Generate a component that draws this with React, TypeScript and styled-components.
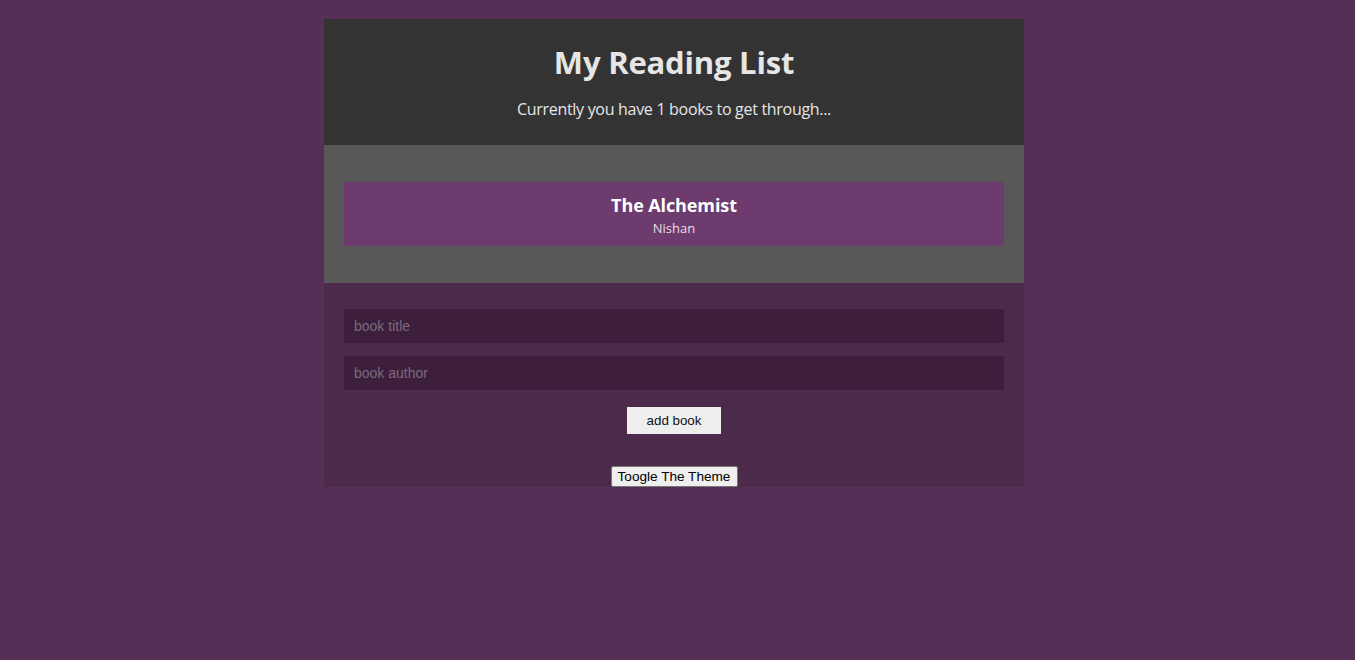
import React, { useState } from "react";
import styled, { createGlobalStyle } from "styled-components";

const GlobalStyle = createGlobalStyle`
  html, body { margin: 0; padding: 0; }
  body {
    background: #552f55;
    font-family: "Open Sans", "Noto Sans", sans-serif;
    min-height: 660px;
    padding-right: 7px;
  }
`;

const Container = styled.div`
  width: 700px;
  margin: 19px auto 0;
  background: #4c2a4c;
`;

const Navbar = styled.header`
  background: #333333;
  color: #e6e6e6;
  text-align: center;
  height: 126px;
  box-sizing: border-box;
  padding-top: 22px;
`;

const Title = styled.h1`
  margin: 0;
  font-size: 31px;
  font-weight: 700;
  line-height: 42px;
  letter-spacing: -0.2px;
`;

const Subtitle = styled.p`
  margin: 16px 0 0;
  font-size: 16px;
  line-height: 20px;
  letter-spacing: -0.3px;
`;

const ListSection = styled.section`
  background: #585858;
  padding: 37px 20px;
`;

const List = styled.ul`
  list-style: none;
  margin: 0;
  padding: 0;
`;

const BookItem = styled.li`
  background: #6e3b6e;
  color: #ffffff;
  text-align: center;
  height: 64px;
  box-sizing: border-box;
  padding-top: 11px;
`;

const BookTitle = styled.div`
  font-size: 18px;
  font-weight: 700;
  line-height: 24px;
  letter-spacing: -0.1px;
`;

const BookAuthor = styled.div`
  font-size: 13px;
  line-height: 22px;
  color: #e6dde6;
`;

const Form = styled.form`
  padding: 26px 20px 0;
  display: flex;
  flex-direction: column;
  align-items: center;
`;

const Input = styled.input`
  width: 100%;
  height: 34px;
  box-sizing: border-box;
  border: 0;
  outline: none;
  background: #3d1f3d;
  color: #dddddd;
  padding: 0 10px;
  margin-bottom: 13px;
  font-family: Arial, "Liberation Sans", sans-serif;
  font-size: 14px;
  &::placeholder { color: #7a6a7a; }
`;

const AddButton = styled.button`
  margin-top: 4px;
  width: 94px;
  height: 27px;
  border: 0;
  background: #eeeeee;
  color: #111;
  font-family: Arial, "Liberation Sans", sans-serif;
  font-size: 13.33px;
  padding: 0;
`;

const ToggleRow = styled.div`
  display: flex;
  justify-content: center;
  padding-top: 32px;
`;

const ToggleButton = styled.button`
  height: 21px;
  width: 127px;
  box-sizing: border-box;
  background: #efefef;
  border: 1px solid #767676;
  border-radius: 2px;
  color: #000;
  font-family: Arial, "Liberation Sans", sans-serif;
  font-size: 13.6px;
  padding: 0 6px;
`;

export default function App() {
  const [title, setTitle] = useState("");
  const [author, setAuthor] = useState("");
  return (
    <>
      <GlobalStyle />
      <Container>
        <Navbar>
          <Title>My Reading List</Title>
          <Subtitle>Currently you have 1 books to get through...</Subtitle>
        </Navbar>
        <ListSection>
          <List>
            <BookItem>
              <BookTitle>The Alchemist</BookTitle>
              <BookAuthor>Nishan</BookAuthor>
            </BookItem>
          </List>
        </ListSection>
        <Form onSubmit={(e) => e.preventDefault()}>
          <Input placeholder="book title" value={title} onChange={(e) => setTitle(e.target.value)} />
          <Input placeholder="book author" value={author} onChange={(e) => setAuthor(e.target.value)} />
          <AddButton type="submit">add book</AddButton>
        </Form>
        <ToggleRow>
          <ToggleButton type="button">Toogle The Theme</ToggleButton>
        </ToggleRow>
      </Container>
    </>
  );
}
